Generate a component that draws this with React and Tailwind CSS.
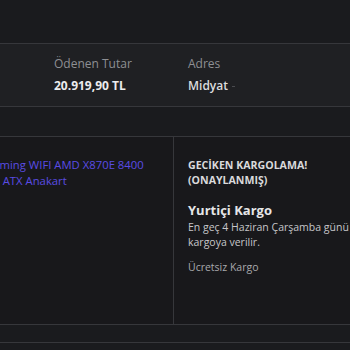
export default function App() {
  return (
    <div
      className="w-[350px] h-[350px] overflow-hidden bg-[#1a1b1e] text-[#d4d4d6]"
      style={{ fontFamily: '"Open Sans", "Noto Sans", sans-serif' }}
    >
      {/* page header area */}
      <div className="h-[44px] border-b border-[#36373b]" />

      {/* order summary */}
      <div className="h-[63px] bg-[#1f2023] border-b border-[#36373b] flex pt-[12px]">
        <div className="ml-[54px] w-[134px]">
          <p className="text-[12px] leading-[16px] text-[#8e8f93]">Ödenen Tutar</p>
          <p className="mt-[6px] text-[12px] leading-[16px] font-bold text-[#ececee]">
            20.919,90 TL
          </p>
        </div>
        <div>
          <p className="text-[12px] leading-[16px] text-[#8e8f93]">Adres</p>
          <p className="mt-[6px] text-[12px] leading-[16px] font-semibold text-[#dcdcde] flex items-center">
            Midyat
            <span className="ml-[4px] w-[3px] h-[1px] bg-[#4a4b4f]" />
          </p>
        </div>
      </div>

      <div className="h-[30px] border-b border-[#36373b]" />

      {/* shipment row */}
      <div className="h-[188px] bg-[#18181b] border-b border-[#36373b] flex">
        <div className="w-[174px] border-r border-[#36373b] overflow-hidden pt-[20px]">
          <div className="text-[11.3px] leading-[16px] text-[#5a4ce4] whitespace-nowrap">
            <p className="-ml-[15px]">Gaming WIFI AMD X870E 8400</p>
            <p className="-ml-[24px]">MHz ATX Anakart</p>
          </div>
        </div>
        <div className="flex-1 pl-[14px] pt-[21px] whitespace-nowrap">
          <p className="text-[10.6px] leading-[15px] font-bold text-[#dadadc]">
            GECİKEN KARGOLAMA!
            <br />
            (ONAYLANMIŞ)
          </p>
          <p className="mt-[13px] text-[13px] leading-[18px] font-bold text-[#e6e6e8]">
            Yurtiçi Kargo
          </p>
          <p className="mt-[1px] text-[10.5px] leading-[15px] text-[#c6c6c9]">
            En geç 4 Haziran Çarşamba günü
            <br />
            kargoya verilir.
          </p>
          <p className="mt-[10px] text-[10.5px] leading-[15px] text-[#a9a9ad]">
            Ücretsiz Kargo
          </p>
        </div>
      </div>

      <div className="h-[18px] border-b border-[#36373b]" />
    </div>
  );
}
